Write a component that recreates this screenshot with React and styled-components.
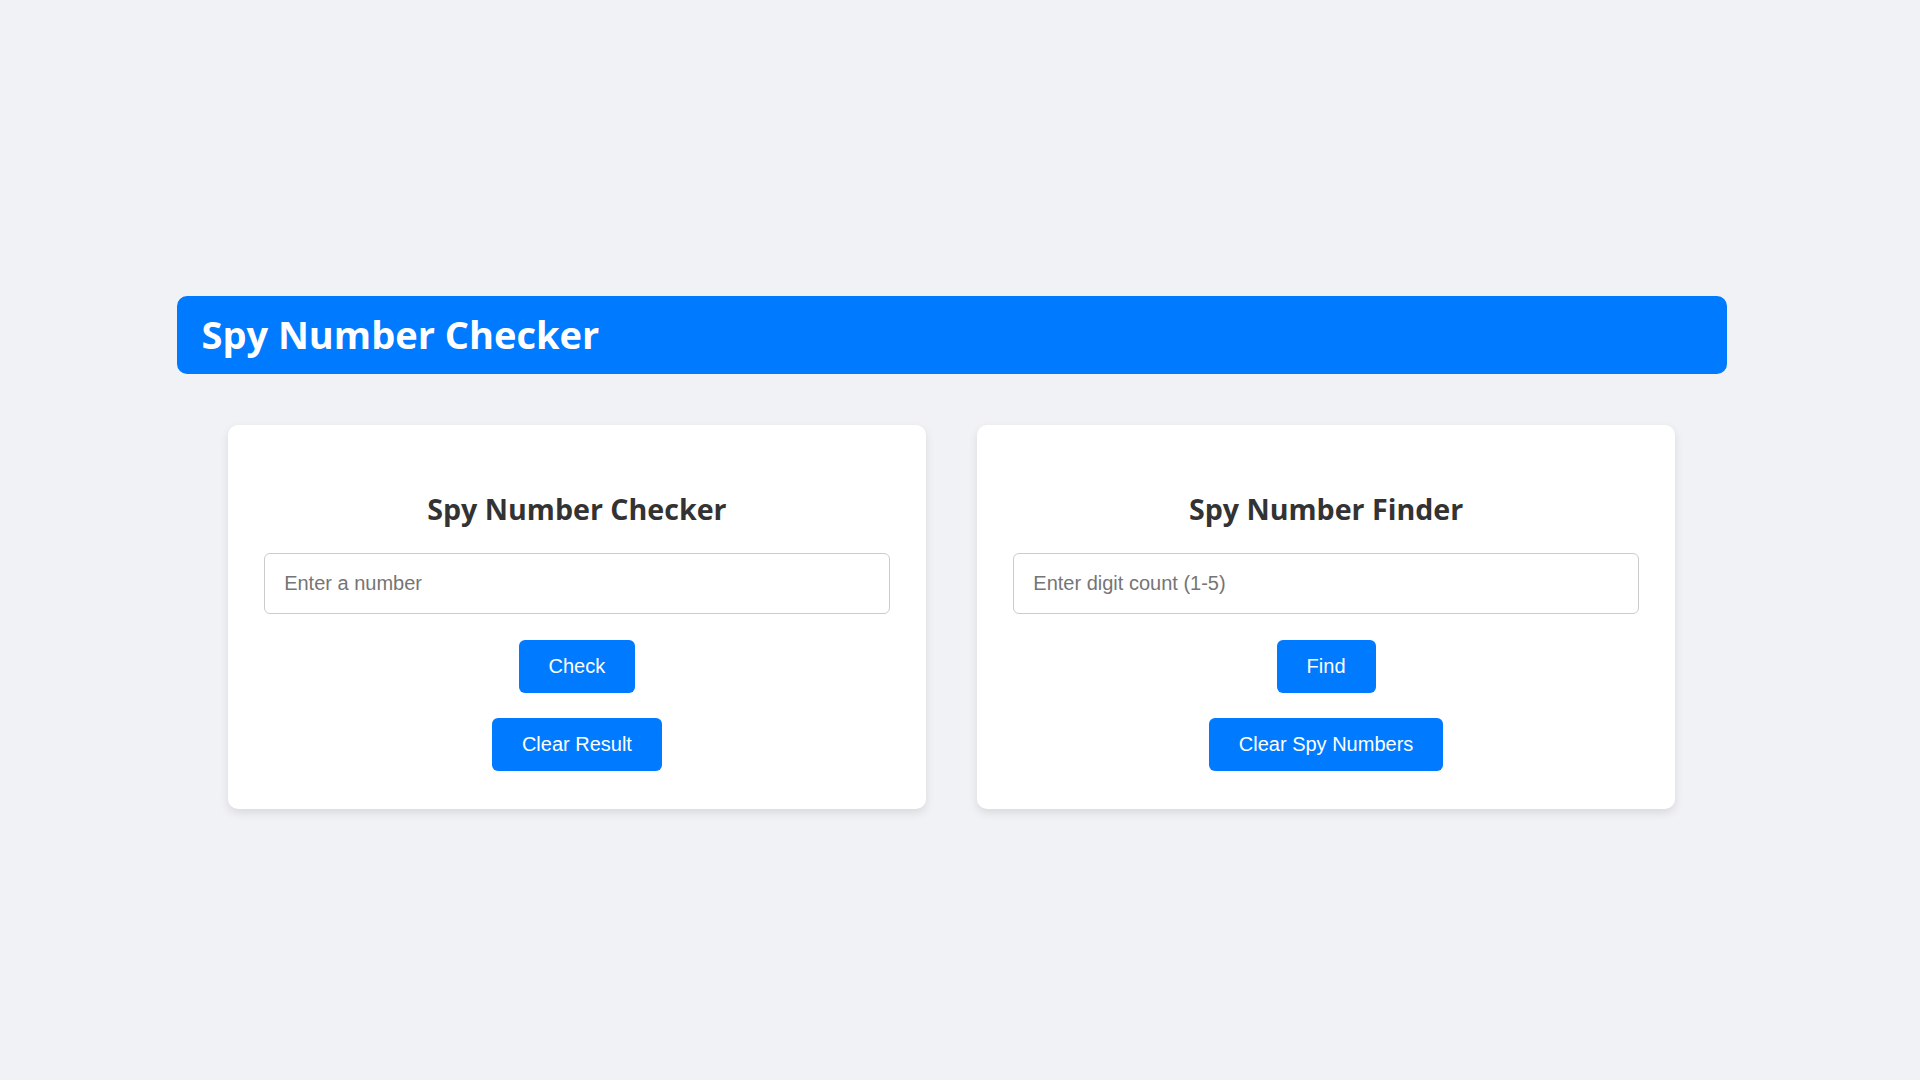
import React, { useState } from 'react'
import styled, { createGlobalStyle } from 'styled-components'

const GlobalStyle = createGlobalStyle`
    body {
        margin: 0;
        background: #f0f2f5;
        font-family: "Open Sans", "Noto Sans", sans-serif;
    }
    * {
        box-sizing: border-box;
    }
`

/* right padding keeps the layout width of a page with a classic scrollbar */
const Page = styled.div`
    min-height: 100vh;
    box-sizing: content-box;
    padding: 12px 17px 68px 0;
    display: flex;
    flex-direction: column;
    justify-content: center;
    align-items: center;
`

const Container = styled.div`
    width: 100%;
    max-width: 1550px;
    display: flex;
    flex-direction: column;
    gap: 51px;
`

const Header = styled.header`
    background: #007bff;
    border-radius: 10px;
    padding: 12px 25px 14px;
`

const HeaderTitle = styled.h1`
    margin: 0;
    color: #fff;
    font-size: 38px;
    font-weight: 700;
    line-height: normal;
`

const Cards = styled.div`
    display: flex;
    justify-content: space-evenly;
`

const Card = styled.section`
    width: 45%;
    background: #fff;
    border-radius: 10px;
    padding: 37px 36px 38px;
    box-shadow: 0 4px 10px rgba(0, 0, 0, 0.1);
    display: flex;
    flex-direction: column;
    align-items: center;
`

const CardTitle = styled.h2`
    margin: 27px 0 25px;
    color: #333;
    font-size: 28.6px;
    font-weight: 700;
    line-height: normal;
    text-align: center;
`

const Input = styled.input`
    width: 100%;
    padding: 18px 19px;
    font-family: "Liberation Sans", Arial, sans-serif;
    font-size: 20px;
    line-height: 23px;
    color: #333;
    border: 1px solid #ccc;
    border-radius: 6px;
    outline: none;
    margin-bottom: 26px;

    &::placeholder {
        color: #757575;
    }
`

const Button = styled.button`
    padding: 15px 30px;
    font-family: "Liberation Sans", Arial, sans-serif;
    font-size: 20px;
    line-height: 23px;
    color: #fff;
    background: #007bff;
    border: none;
    border-radius: 6px;
    cursor: pointer;
    margin-bottom: ${({ $spaced }) => ($spaced ? '25px' : '0')};

    &:hover {
        background: #0069d9;
    }
`

const isSpy = (n) => {
    const digits = String(n).split('').map(Number)
    const sum = digits.reduce((a, b) => a + b, 0)
    const prod = digits.reduce((a, b) => a * b, 1)
    return sum === prod
}

const App = () => {
    const [num, setNum] = useState('')
    const [count, setCount] = useState('')
    const [result, setResult] = useState('')
    const [spies, setSpies] = useState([])

    const check = () => {
        if (num === '') return
        setResult(isSpy(num) ? `${num} is a Spy Number` : `${num} is not a Spy Number`)
    }

    const find = () => {
        const d = parseInt(count, 10)
        if (!d || d < 1 || d > 5) return
        const list = []
        for (let i = Math.pow(10, d - 1); i < Math.pow(10, d); i++) {
            if (isSpy(i)) list.push(i)
        }
        setSpies(list)
    }

    return (
        <>
            <GlobalStyle />
            <Page>
                <Container>
                    <Header>
                        <HeaderTitle>Spy Number Checker</HeaderTitle>
                    </Header>
                    <Cards>
                        <Card>
                            <CardTitle>Spy Number Checker</CardTitle>
                            <Input
                                type="number"
                                placeholder="Enter a number"
                                value={num}
                                onChange={(e) => setNum(e.target.value)}
                            />
                            <Button $spaced onClick={check}>Check</Button>
                            {result && <p>{result}</p>}
                            <Button onClick={() => setResult('')}>Clear Result</Button>
                        </Card>
                        <Card>
                            <CardTitle>Spy Number Finder</CardTitle>
                            <Input
                                type="number"
                                placeholder="Enter digit count (1-5)"
                                value={count}
                                onChange={(e) => setCount(e.target.value)}
                            />
                            <Button $spaced onClick={find}>Find</Button>
                            {spies.length > 0 && <p>{spies.join(', ')}</p>}
                            <Button onClick={() => setSpies([])}>Clear Spy Numbers</Button>
                        </Card>
                    </Cards>
                </Container>
            </Page>
        </>
    )
}

export default App
